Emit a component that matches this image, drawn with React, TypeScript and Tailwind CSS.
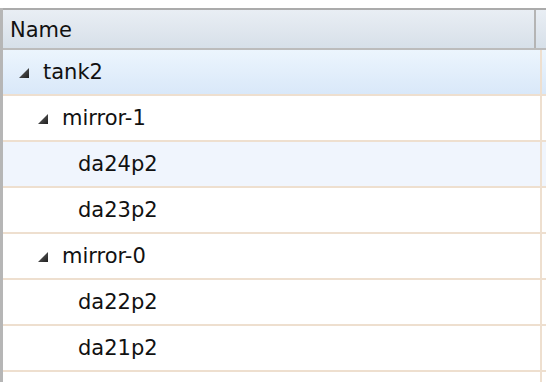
import React from 'react';

type TreeRow = {
  label: string;
  level: number;
  expandable?: boolean;
  selected?: boolean;
  hover?: boolean;
};

const rows: TreeRow[] = [
  { label: 'tank2', level: 0, expandable: true, selected: true },
  { label: 'mirror-1', level: 1, expandable: true },
  { label: 'da24p2', level: 2, hover: true },
  { label: 'da23p2', level: 2 },
  { label: 'mirror-0', level: 1, expandable: true },
  { label: 'da22p2', level: 2 },
  { label: 'da21p2', level: 2 },
  { label: '', level: 0 },
];

function Expander() {
  return (
    <svg width="10" height="10" viewBox="0 0 10 10" className="shrink-0">
      <defs>
        <linearGradient id="tri" x1="0" y1="0" x2="1" y2="1">
          <stop offset="0" stopColor="#6a6a6a" />
          <stop offset="1" stopColor="#1e1e1e" />
        </linearGradient>
      </defs>
      <polygon points="10,0 10,10 0,10" fill="url(#tri)" />
    </svg>
  );
}

function Row({ row }: { row: TreeRow }) {
  const bg = row.selected
    ? 'bg-gradient-to-b from-[#ecf5fd] to-[#d9e8f9]'
    : row.hover
      ? 'bg-[#f0f5fd]'
      : 'bg-white';

  const indent =
    row.level === 0 ? 'pl-[16px]' : row.level === 1 ? 'pl-[35px]' : 'pl-[75px]';

  return (
    <div className={`flex h-[46px] border-b-2 border-[#eedfcf] ${bg}`}>
      <div className={`flex w-[539px] items-center border-r-2 border-[#eedfcf] pt-[2px] ${indent}`}>
        {row.expandable && <Expander />}
        <span className={row.expandable ? 'ml-[14px]' : ''}>{row.label}</span>
      </div>
      <div className="flex-1" />
    </div>
  );
}

export default function App() {
  return (
    <div
      className="h-[382px] w-[546px] overflow-hidden bg-white pt-2 text-[21px] text-[#111]"
      style={{ fontFamily: '"DejaVu Sans", Verdana, sans-serif' }}
    >
      <div className="h-full border-l-[3px] border-[#b6b6b6]">
        <div className="flex h-[42px] border-y-2 border-t-[#ababab] border-b-[#bcbcbc] bg-gradient-to-b from-[#e9eef4] to-[#d7e0e9]">
          <div className="flex w-[533px] items-center border-r-2 border-[#b4b4b4] pl-[7px] pt-[3px]">
            Name
          </div>
          <div className="flex-1" />
        </div>
        {rows.map((r, i) => (
          <Row key={i} row={r} />
        ))}
      </div>
    </div>
  );
}
